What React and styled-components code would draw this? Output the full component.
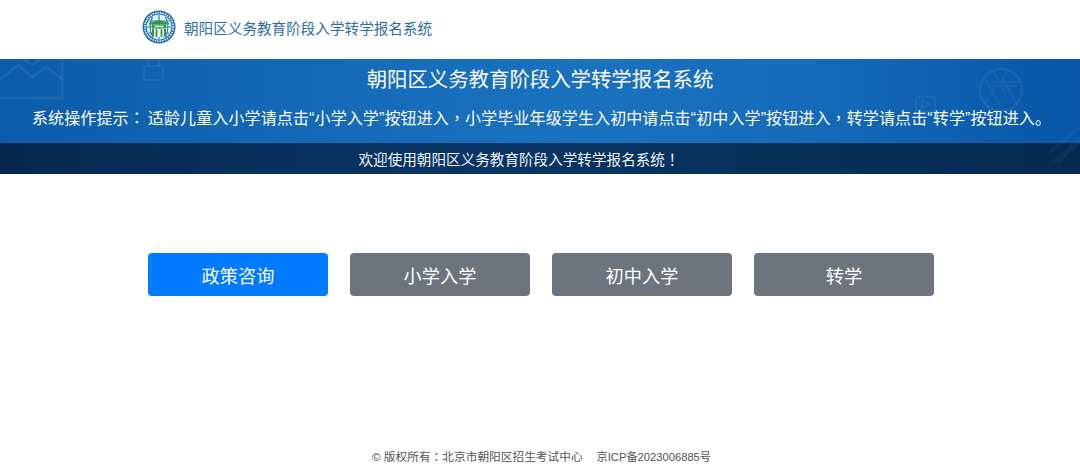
import React from 'react';
import styled, { createGlobalStyle } from 'styled-components';

const GlobalStyle = createGlobalStyle`
  html, body {
    margin: 0;
    padding: 0;
    background: #fff;
    font-family: "Liberation Sans", "Noto Sans CJK SC", sans-serif;
  }
`;

const Page = styled.div`
  height: 473px;
  display: flex;
  flex-direction: column;
  overflow: hidden;
`;

const Header = styled.header`
  height: 59px;
  flex: none;
  padding: 0 0 5px 142px;
  box-sizing: border-box;
  display: flex;
  align-items: center;
  gap: 8px;
`;

const HeaderTitle = styled.span`
  font-size: 14.6px;
  color: #2d6ea6;
`;

const Banner = styled.section`
  position: relative;
  height: 115px;
  flex: none;
  display: flex;
  flex-direction: column;
  background: linear-gradient(90deg, #0b5cab 0%, #166cb9 35%, #1a72bf 55%, #156bb9 75%, #0756a7 100%);
  overflow: hidden;
`;

const BannerArt = styled.svg`
  position: absolute;
  left: 0;
  top: 0;
  z-index: 1;
  width: 100%;
  height: 100%;
  pointer-events: none;
`;

const BannerBody = styled.div`
  height: 84px;
  flex: none;
  color: #fff;
  text-align: center;
`;

const BannerTitle = styled.h1`
  margin: 0;
  padding-top: 6px;
  font-size: 20.4px;
  line-height: 30px;
  font-weight: 400;
`;

const Hint = styled.p`
  margin: 0;
  padding: 9px 0 0 32px;
  font-size: 16px;
  letter-spacing: 0.12px;
  line-height: 26px;
  text-align: left;
  white-space: nowrap;
`;

const HintLabel = styled.span`
  margin-right: 3px;
`;

// centred full-width punctuation, as the page's own font draws it
const Punct = styled.span`
  font-family: "Noto Sans CJK TC", sans-serif;
`;

const Welcome = styled.div`
  flex: 1;
  padding-right: 42px;
  display: flex;
  align-items: center;
  justify-content: center;
  background: linear-gradient(90deg, #06284f 0%, #0a3566 45%, #073059 70%, #052a52 100%);
  color: #eef3f8;
  font-size: 14.6px;
`;

const ButtonRow = styled.nav`
  margin-top: 79px;
  padding-left: 148px;
  display: flex;
  gap: 22px;
`;

const EntryButton = styled.button`
  width: 180px;
  height: 43px;
  padding: 0;
  border: 0;
  border-radius: 4px;
  background: ${p => (p.$primary ? '#007bff' : '#6c757d')};
  color: #fff;
  font-family: inherit;
  font-size: 18.2px;
  cursor: pointer;
`;

const Footer = styled.footer`
  margin-top: auto;
  height: 26px;
  flex: none;
  padding-left: 372px;
  display: flex;
  gap: 14px;
  align-items: baseline;
  font-size: 11.7px;
  line-height: 17px;
  color: #555;
`;

const Record = styled.span`
  font-size: 11.2px;
`;

const Logo = () => (
  <svg width="34" height="34" viewBox="0 0 34 34">
    <circle cx="17" cy="17" r="16.5" fill="#1f6fb5" />
    <circle cx="17" cy="17" r="14.2" fill="none" stroke="#fff" strokeWidth="1.6" strokeDasharray="1.4 1.1" />
    <circle cx="17" cy="17" r="12.4" fill="#e6f0f8" />
    <path d="M5 17h24M7 11h20M7 23h20M17 5v24M10.5 7c-3 6-3 14 0 20M23.5 7c3 6 3 14 0 20" stroke="#2a7cc0" strokeWidth="1.2" fill="none" />
    <path d="M7 13l10-3 10 3v1.5H7z" fill="#2f9a46" />
    <rect x="10" y="14.5" width="14" height="4" fill="#2f9a46" />
    <rect x="12.5" y="15.5" width="9" height="1.8" fill="#dff0df" />
    <path d="M10 19h2.2v8H10zM13.4 19h2.2v8h-2.2zM18.4 19h2.2v8h-2.2zM21.8 19H24v8h-2.2z" fill="#2f9a46" />
    <path d="M12.2 19h1.2v8h-1.2zM15.6 19h2.8v8h-2.8zM20.6 19h1.2v8h-1.2z" fill="#fff" />
  </svg>
);

const Decorations = () => (
  <BannerArt viewBox="0 0 1080 115" fill="none" stroke="#fff" strokeOpacity="0.06">
    <g strokeWidth="3">
      <path d="M-8 -6h70v45H-8z" />
      <path d="M-4 24l22-18 14 12 14-10 16 12" />
      <circle cx="32" cy="-2" r="7" />
    </g>
    <g strokeWidth="2">
      <rect x="144" y="7" width="19" height="14" rx="2" />
      <path d="M148 7V3a5.5 5.5 0 0 1 11 0v4" />
    </g>
    <g strokeWidth="2.5">
      <circle cx="1001" cy="31" r="21" />
      <path d="M993 12l13 23M1020 23h-27M1017 45l-14-24M985 45l10-18h20M985 20l14 24M1008 11l-9 16" strokeWidth="1.5" />
    </g>
    <g strokeWidth="1.6">
      <rect x="916" y="38" width="19" height="14" rx="2" />
      <path d="M922 41l8 4-8 4z" />
    </g>
    <g strokeWidth="3" strokeOpacity="0.035">
      <path d="M1050 93l30-25M1058 103l22-20M1052 104l28-24" />
    </g>
  </BannerArt>
);

export default function App() {
  return (
    <>
      <GlobalStyle />
      <Page>
        <Header>
          <Logo />
          <HeaderTitle>朝阳区义务教育阶段入学转学报名系统</HeaderTitle>
        </Header>
        <Banner>
          <Decorations />
          <BannerBody>
            <BannerTitle>朝阳区义务教育阶段入学转学报名系统</BannerTitle>
            <Hint>
              <HintLabel>系统操作提示<Punct>：</Punct></HintLabel>
              适龄儿童入小学请点击“小学入学”按钮进入<Punct>，</Punct>小学毕业年级学生入初中请点击“初中入学”按钮进入<Punct>，</Punct>转学请点击“转学”按钮进入。
            </Hint>
          </BannerBody>
          <Welcome>欢迎使用朝阳区义务教育阶段入学转学报名系统<Punct>！</Punct></Welcome>
        </Banner>
        <ButtonRow>
          <EntryButton $primary>政策咨询</EntryButton>
          <EntryButton>小学入学</EntryButton>
          <EntryButton>初中入学</EntryButton>
          <EntryButton>转学</EntryButton>
        </ButtonRow>
        <Footer>
          <span>© 版权所有<Punct>：</Punct>北京市朝阳区招生考试中心</span>
          <Record>京ICP备2023006885号</Record>
        </Footer>
      </Page>
    </>
  );
}
